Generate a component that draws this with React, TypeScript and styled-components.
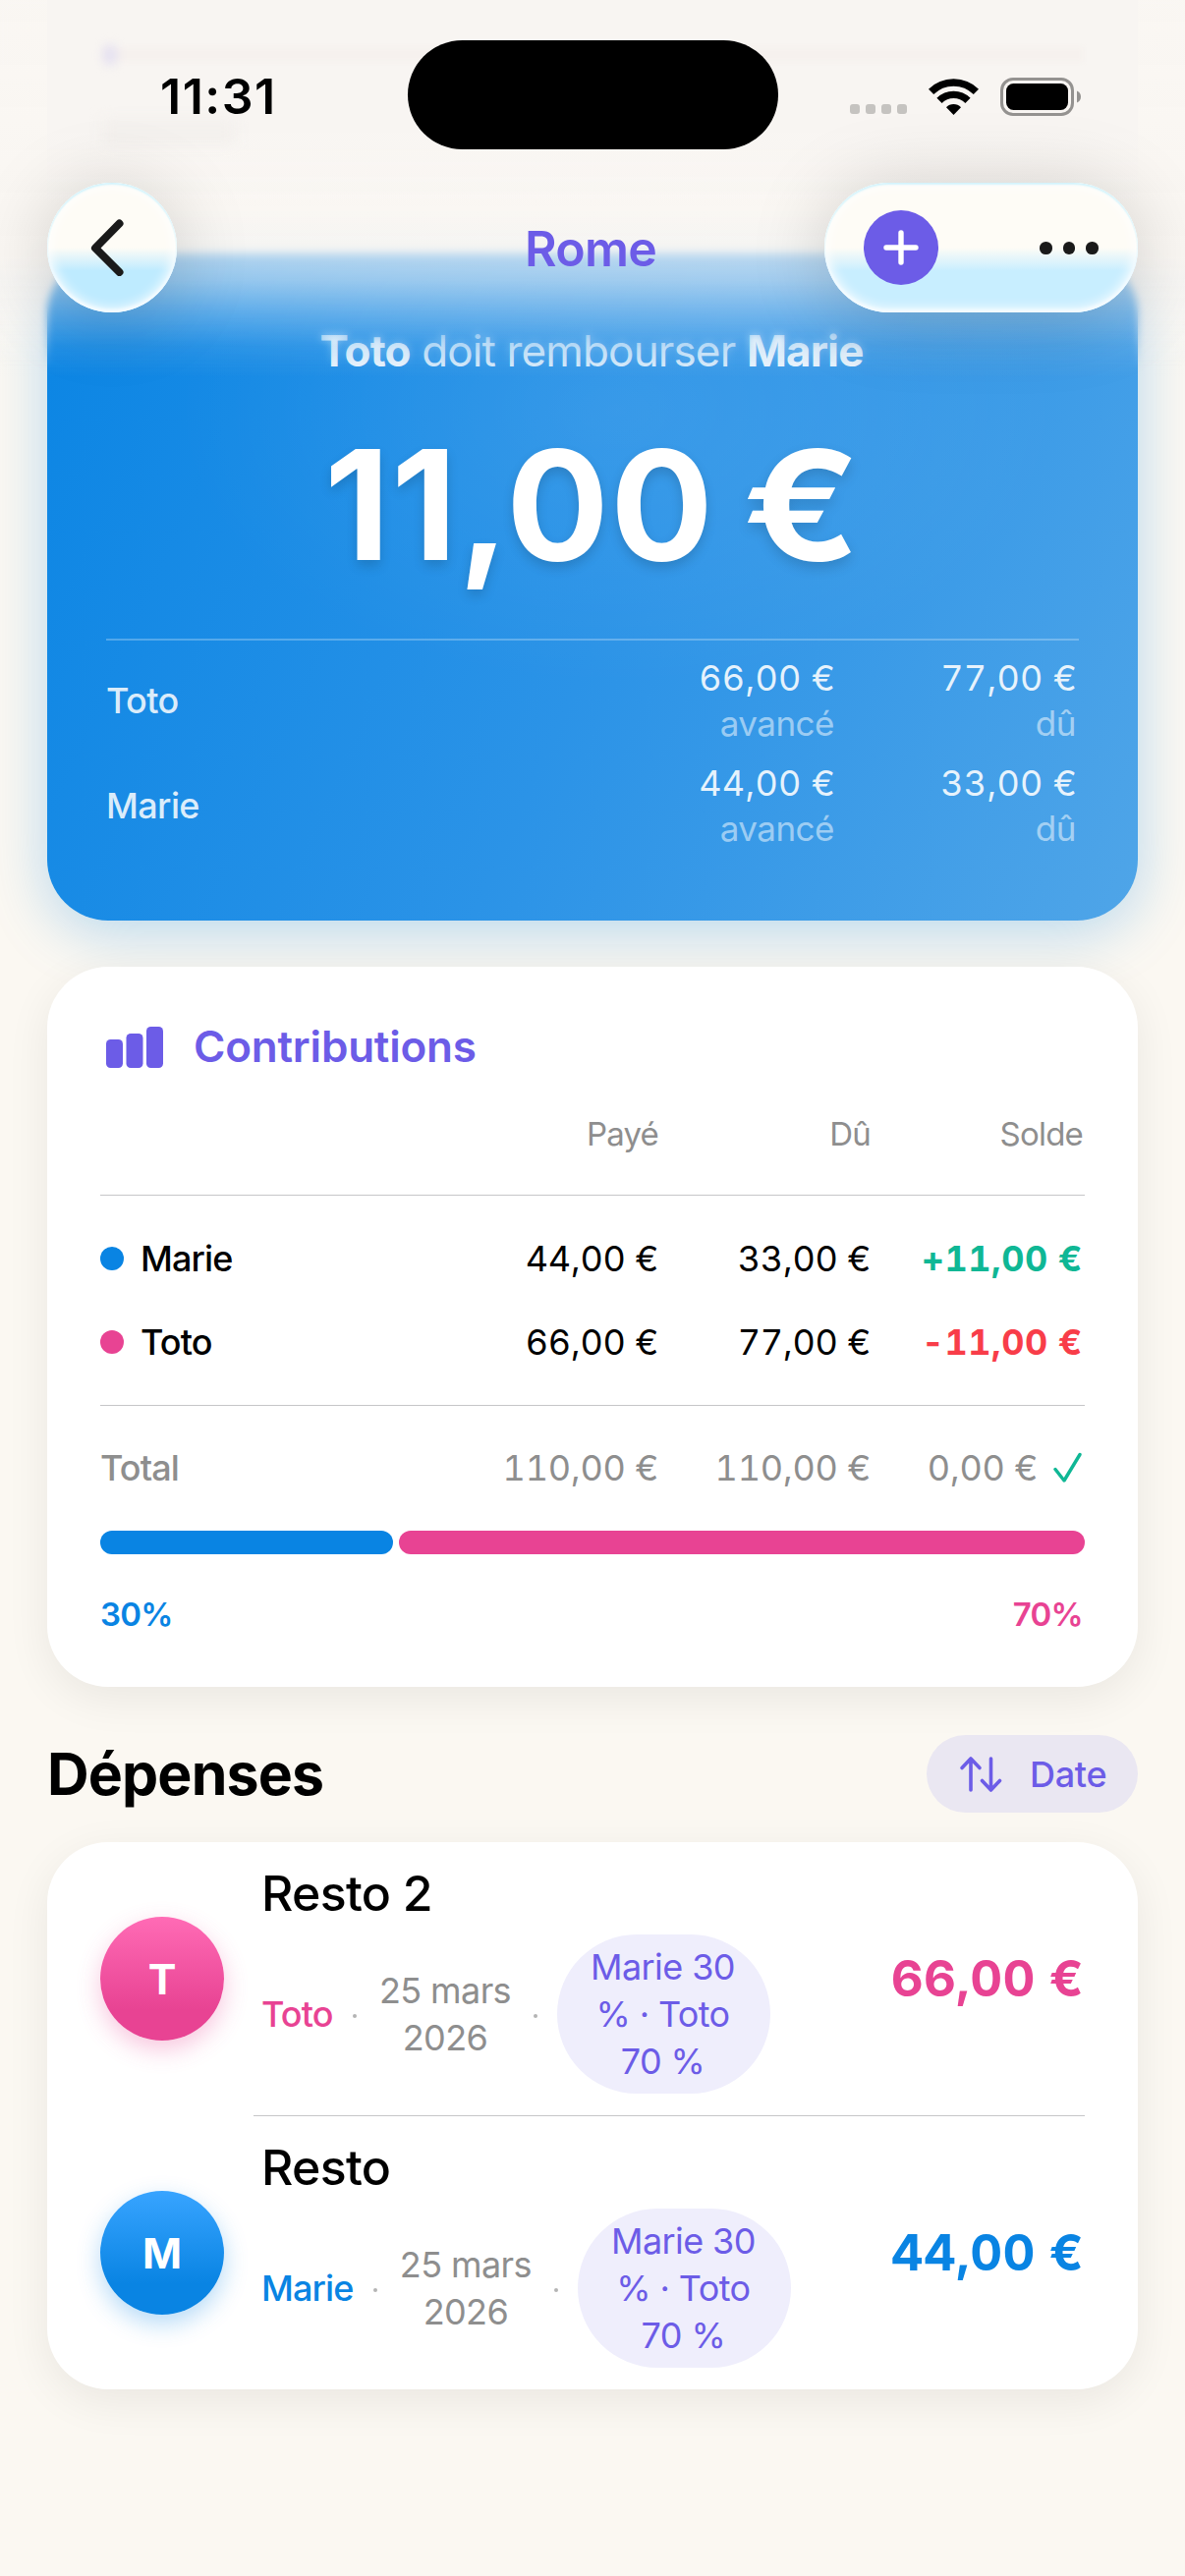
import React from "react";
import styled, { createGlobalStyle } from "styled-components";

const PURPLE = "#6c5ce7";
const BLUE = "#0984e3";
const PINK = "#e84393";
const GREEN = "#0fb795";
const RED = "#f83d49";
const GREY = "#8e8e8e";

const GlobalStyle = createGlobalStyle`
  * { box-sizing: border-box; }
  body { margin: 0; background: #fbf8f2; }
`;

const Screen = styled.div`
  position: relative;
  width: 1206px;
  height: 2622px;
  overflow: hidden;
  background: #fbf8f2;
  color: #000;
  font-family: Inter, "Noto Sans", sans-serif;
  font-size: 36px;
  line-height: 48px;
  white-space: nowrap;
`;

/* Top chrome, laid over the scrolled content */

const TopChrome = styled.header`
  position: absolute;
  inset: 0 0 auto 0;
  height: 400px;
  z-index: 2;
`;

const Veil = styled.div`
  position: absolute;
  inset: 0;
  background: linear-gradient(
    180deg,
    rgba(249, 246, 243, 0.7) 0,
    rgba(249, 246, 243, 0.68) 262px,
    rgba(244, 244, 244, 0.58) 285px,
    rgba(244, 244, 246, 0.3) 322px,
    rgba(244, 246, 250, 0.1) 352px,
    rgba(244, 246, 250, 0) 385px
  );
`;

const SoftBlur = styled.div`
  position: absolute;
  inset: 0;
  height: 376px;
  backdrop-filter: blur(4px);
  mask-image: linear-gradient(180deg, #000 0, #000 310px, transparent 376px);
`;

const GhostCard = styled.div`
  position: absolute;
  inset: -40px 48px auto 48px;
  height: 250px;
  padding: 88px 56px 0;
  background: linear-gradient(180deg, #f8f5f2 70%, rgba(248, 245, 242, 0));
`;

const GhostTrack = styled.div`
  height: 15px;
  background: #f6f1ee;
  filter: blur(2px);
  display: flex;
  align-items: center;
`;

const GhostKnob = styled.div`
  width: 16px;
  height: 22px;
  border-radius: 50%;
  background: #e6e2f1;
  filter: blur(4px);
`;

const GhostLabel = styled.div`
  width: 136px;
  height: 26px;
  margin-top: 58px;
  background: #f3f0ed;
  filter: blur(7px);
`;

const StatusBar = styled.div`
  position: relative;
  height: 186px;
  padding: 41px 106px 0 162px;
  display: grid;
  grid-template-columns: 253px 377px 1fr;
`;

const Clock = styled.div`
  align-self: start;
  padding-left: 1px;
  line-height: 114px;
  font-size: 50px;
  font-weight: 600;
  letter-spacing: 1.5px;
`;

const Island = styled.div`
  height: 111px;
  border-radius: 56px;
  background: #000;
`;

const StatusIcons = styled.div`
  height: 114px;
  display: flex;
  align-items: center;
  justify-content: flex-end;
`;

const Cellular = styled.div`
  display: flex;
  gap: 6px;
  margin: 26px 22px 0 0;
`;

const CellDot = styled.i`
  width: 10px;
  height: 10px;
  border-radius: 3px;
  background: #c5c3c0;
`;

const WifiSvg = styled.svg`
  width: 51px;
  height: 37px;
  margin-right: 22px;
`;

const BatterySvg = styled.svg`
  width: 83px;
  height: 39px;
  margin-right: -1px;
`;

const NavBar = styled.nav`
  position: relative;
  height: 132px;
  padding: 0 48px;
  display: flex;
  justify-content: space-between;
`;

const Glass = styled.div<{ $w: number; $tint: string }>`
  width: ${(p) => p.$w}px;
  height: 132px;
  border-radius: 66px;
  display: flex;
  align-items: center;
  background: linear-gradient(180deg, #fefcf6 0, #fefcf6 50%, ${(p) => p.$tint} 68%, ${(p) => p.$tint} 100%);
  box-shadow:
    inset 0 2px 2px rgba(205, 242, 252, 0.9),
    inset 0 -3px 3px #f4fbff,
    inset 0 0 12px 4px rgba(255, 255, 255, 0.85),
    0 6px 80px rgba(0, 0, 0, 0.18);
`;

const ChevronSvg = styled.svg`
  width: 34px;
  height: 58px;
  margin-left: 44px;
`;

const NavTitle = styled.h1`
  position: absolute;
  left: 0;
  right: 4px;
  margin: 0;
  text-align: center;
  line-height: 134px;
  font-size: 50px;
  font-weight: 600;
  letter-spacing: -0.8px;
  color: ${PURPLE};
`;

const AddSvg = styled.svg`
  width: 76px;
  height: 76px;
  margin-left: 40px;
`;

const MoreDots = styled.div`
  display: flex;
  gap: 11px;
  margin: 1px 0 0 103px;
`;

const MoreDot = styled.i`
  width: 12.6px;
  height: 12.6px;
  border-radius: 50%;
  background: #1a1a1a;
`;

/* Scrolled content */

const Content = styled.main`
  padding: 258px 48px 0;
`;

const Hero = styled.section`
  height: 678.5px;
  padding: 67px 60px 0;
  border-radius: 62px;
  color: #fff;
  background:
    radial-gradient(closest-side, rgba(255, 255, 255, 0.08), rgba(255, 255, 255, 0)) 130px -120px / 900px 560px no-repeat,
    linear-gradient(114deg, #0d86e4 4%, #2b93e7 52%, #4fa5e8 100%);
  box-shadow: 0 12px 60px rgba(9, 132, 227, 0.28);
`;

const Sentence = styled.p`
  margin: 0;
  padding-right: 2px;
  text-align: center;
  font-size: 44px;
  line-height: 64px;
  letter-spacing: -0.86px;
  color: rgba(255, 255, 255, 0.82);

  b { font-weight: 700; color: rgba(255, 255, 255, 0.92); }
`;

const BigAmount = styled.div`
  margin-top: 45px;
  padding-right: 13px;
  text-align: center;
  font-size: 155px;
  line-height: 160px;
  font-weight: 700;
  letter-spacing: 1.5px;
  word-spacing: -10px;
  text-shadow: 0 6px 12px rgba(0, 0, 0, 0.15);
`;

const WideGlyph = styled.span`
  display: inline-block;
  transform: scaleX(1.13);
  transform-origin: 0 50%;
`;

const HeroRule = styled.hr`
  height: 2px;
  margin: 56px 0 16px;
  border: 0;
  background: rgba(255, 255, 255, 0.26);
`;

const HeroRow = styled.div`
  display: grid;
  grid-template-columns: 1fr 246px 246px;
  align-items: center;
  height: 90px;
  margin-bottom: 17px;
  line-height: 45px;
  text-align: right;
`;

const HeroName = styled.div`
  padding-top: 1px;
  text-align: left;
  font-weight: 500;
  letter-spacing: -0.6px;
  color: rgba(255, 255, 255, 0.85);
`;

const HeroValue = styled.div`
  padding-right: 2px;
  font-variant-numeric: tabular-nums;
  letter-spacing: 0.3px;
  color: rgba(255, 255, 255, 0.88);
`;

const HeroLabel = styled.div`
  padding: 1px 3px 0 0;
  margin-bottom: -1px;
  font-size: 35px;
  letter-spacing: -0.5px;
  color: rgba(255, 255, 255, 0.52);
`;

const Card = styled.section`
  border-radius: 62px;
  background: #fff;
  box-shadow: 0 12px 45px rgba(0, 0, 0, 0.07);
`;

const Contributions = styled(Card)`
  height: 733px;
  margin-top: 47.5px;
  padding: 51px 54px 0;
`;

const CardTitle = styled.h2`
  display: flex;
  align-items: center;
  gap: 31px;
  height: 60px;
  margin: 0 0 35px;
  padding-left: 6px;
  font-size: 44px;
  font-weight: 600;
  letter-spacing: -0.2px;
  color: ${PURPLE};
`;

const BarsSvg = styled.svg`
  width: 58px;
  height: 42px;
  margin-top: 2px;
`;

const TableRow = styled.div<{ $h?: number; $muted?: boolean }>`
  display: grid;
  grid-template-columns: 1fr 216px 216px 216px;
  align-items: center;
  height: ${(p) => p.$h ?? 85}px;
  text-align: right;
  color: ${(p) => (p.$muted ? GREY : "#000")};
`;

const HeadCell = styled.div`
  padding-right: 2px;
  font-size: 33px;
  letter-spacing: -0.8px;
`;

const Person = styled.div`
  display: flex;
  align-items: center;
  gap: 17px;
  font-weight: 500;
  letter-spacing: -0.9px;
`;

const Swatch = styled.i<{ $c: string }>`
  width: 24px;
  height: 24px;
  border-radius: 50%;
  background: ${(p) => p.$c};
`;

const Cell = styled.div<{ $c?: string }>`
  padding-right: 2px;
  font-variant-numeric: tabular-nums;
  letter-spacing: ${(p) => (p.$c ? 0.5 : -0.2)}px;
  color: ${(p) => p.$c ?? "inherit"};
  font-weight: ${(p) => (p.$c ? 700 : 400)};
`;

const Balanced = styled(Cell)`
  display: flex;
  align-items: center;
  justify-content: flex-end;
  gap: 16px;
`;

const CheckSvg = styled.svg`
  width: 30px;
  height: 32px;
`;

const Rule = styled.hr<{ $top?: number; $bottom?: number; $left?: number; $right?: number }>`
  height: 1px;
  margin: ${(p) => `${p.$top ?? 0}px ${p.$right ?? 0}px ${p.$bottom ?? 0}px ${p.$left ?? 0}px`};
  border: 0;
  background: #c6c6c8;
`;

const ShareBar = styled.div`
  display: flex;
  gap: 6px;
  height: 24px;
  margin-top: 22px;
`;

const Share = styled.div<{ $c: string; $n: number }>`
  flex: ${(p) => p.$n} 1 0;
  border-radius: 12px;
  background: ${(p) => p.$c};
`;

const ShareLabels = styled.div`
  display: flex;
  justify-content: space-between;
  margin-top: 37px;
  padding-right: 2px;
  font-size: 33px;
  font-weight: 600;
  letter-spacing: -0.7px;
`;

const ShareLabel = styled.span<{ $c: string }>`
  color: ${(p) => p.$c};
`;

const SectionHead = styled.div`
  display: flex;
  align-items: center;
  justify-content: space-between;
  height: 79px;
  margin: 49px 0 30px;
`;

const SectionTitle = styled.h2`
  margin: 0;
  font-size: 59px;
  font-weight: 700;
  letter-spacing: -0.86px;
`;

const SortButton = styled.div`
  display: flex;
  align-items: center;
  gap: 28px;
  width: 215px;
  height: 79px;
  padding-left: 33px;
  border-radius: 40px;
  background: #eae7f2;
  font-weight: 500;
  letter-spacing: -0.3px;
  color: ${PURPLE};
`;

const SortSvg = styled.svg`
  width: 44px;
  height: 42px;
`;

const ExpenseRow = styled.div`
  display: flex;
  align-items: center;
  height: 278px;
  padding: 0 54px;
`;

const Avatar = styled.div<{ $from: string; $to: string; $glow: string }>`
  width: 126px;
  height: 126px;
  border-radius: 50%;
  line-height: 126px;
  text-align: center;
  font-size: 43px;
  font-weight: 700;
  color: #fff;
  background: linear-gradient(180deg, ${(p) => p.$from} 0, ${(p) => p.$to} 75%);
  box-shadow: 0 9px 24px ${(p) => p.$glow};
`;

const ExpenseBody = styled.div`
  flex: 1;
  margin-left: 38px;
`;

const ExpenseTitle = styled.div`
  height: 61px;
  margin-bottom: 11.5px;
  line-height: 61px;
  font-size: 50px;
  font-weight: 500;
  letter-spacing: -0.7px;
`;

const Meta = styled.div`
  display: flex;
  align-items: center;
`;

const Payer = styled.span<{ $c: string }>`
  font-weight: 500;
  letter-spacing: -0.9px;
  color: ${(p) => p.$c};
`;

const Middot = styled.i`
  width: 4px;
  height: 4px;
  margin: 3px 22px 0 21px;
  border-radius: 50%;
  background: #b4b4b4;
`;

const When = styled.span`
  width: 136px;
  padding-right: 1px;
  margin-right: 1px;
  text-align: center;
  letter-spacing: -0.6px;
  color: ${GREY};
`;

const SplitTag = styled.span`
  width: 217px;
  margin-left: -2px;
  padding: 9px 3px 9px 0;
  border-radius: 82px;
  text-align: center;
  letter-spacing: -0.6px;
  background: #efeefc;
  color: ${PURPLE};
`;

const Amount = styled.div<{ $c: string }>`
  padding-right: 1px;
  font-size: 51px;
  font-weight: 700;
  font-variant-numeric: tabular-nums;
  letter-spacing: 0.3px;
  color: ${(p) => p.$c};
`;

const hero = [
  { name: "Toto", paid: "66,00 €", due: "77,00 €" },
  { name: "Marie", paid: "44,00 €", due: "33,00 €" },
];

const members = [
  { name: "Marie", color: BLUE, paid: "44,00 €", due: "33,00 €", balance: "+11,00 €", tone: GREEN },
  { name: "Toto", color: PINK, paid: "66,00 €", due: "77,00 €", balance: "-11,00 €", tone: RED },
];

const expenses = [
  { title: "Resto 2", payer: "Toto", color: PINK, from: "#ff6bb5", glow: "rgba(232,67,147,.3)", amount: "66,00 €" },
  { title: "Resto", payer: "Marie", color: BLUE, from: "#38a4ff", glow: "rgba(9,132,227,.3)", amount: "44,00 €" },
];

export default function App() {
  return (
    <Screen>
      <GlobalStyle />
      <Content>
        <Hero>
          <Sentence>
            <b>Toto</b> doit rembourser <b>Marie</b>
          </Sentence>
          <BigAmount>
            11,00 <WideGlyph>€</WideGlyph>
          </BigAmount>
          <HeroRule />
          {hero.map((h) => (
            <HeroRow key={h.name}>
              <HeroName>{h.name}</HeroName>
              <div>
                <HeroValue>{h.paid}</HeroValue>
                <HeroLabel>avancé</HeroLabel>
              </div>
              <div>
                <HeroValue>{h.due}</HeroValue>
                <HeroLabel>dû</HeroLabel>
              </div>
            </HeroRow>
          ))}
        </Hero>

        <Contributions>
          <CardTitle>
            <BarsSvg viewBox="0 0 58 42" fill={PURPLE}>
              <rect x="0" y="13" width="17" height="29" rx="4.5" />
              <rect x="20.5" y="7" width="17" height="35" rx="4.5" />
              <rect x="41" y="0" width="17" height="42" rx="4.5" />
            </BarsSvg>
            Contributions
          </CardTitle>
          <TableRow $h={40} $muted>
            <div />
            <HeadCell>Payé</HeadCell>
            <HeadCell>Dû</HeadCell>
            <HeadCell>Solde</HeadCell>
          </TableRow>
          <Rule $top={46} $bottom={21} />
          {members.map((m) => (
            <TableRow key={m.name}>
              <Person>
                <Swatch $c={m.color} />
                {m.name}
              </Person>
              <Cell>{m.paid}</Cell>
              <Cell>{m.due}</Cell>
              <Cell $c={m.tone}>{m.balance}</Cell>
            </TableRow>
          ))}
          <Rule $top={22} $bottom={20} />
          <TableRow $muted>
            <Person>Total</Person>
            <Cell>110,00 €</Cell>
            <Cell>110,00 €</Cell>
            <Balanced>
              0,00 €
              <CheckSvg viewBox="0 0 30 32" fill="none" stroke={GREEN} strokeWidth="3.4" strokeLinecap="round" strokeLinejoin="round">
                <path d="M2 17.5 L11 29 L27 2.5" />
              </CheckSvg>
            </Balanced>
          </TableRow>
          <ShareBar>
            <Share $c={BLUE} $n={298} />
            <Share $c={PINK} $n={698} />
          </ShareBar>
          <ShareLabels>
            <ShareLabel $c={BLUE}>30%</ShareLabel>
            <ShareLabel $c={PINK}>70%</ShareLabel>
          </ShareLabels>
        </Contributions>

        <SectionHead>
          <SectionTitle>Dépenses</SectionTitle>
          <SortButton>
            <SortSvg viewBox="0 0 44 42" fill="none" stroke={PURPLE} strokeWidth="3.6" strokeLinecap="round" strokeLinejoin="round">
              <path d="M12 37 V5 M3 14.5 L12 5 L21 14.5" />
              <path d="M32.500 5 V37 M23.500 27.500 L32.500 37 L41.500 27.500" />
            </SortSvg>
            Date
          </SortButton>
        </SectionHead>

        <Card>
          {expenses.map((e, i) => (
            <React.Fragment key={e.title}>
              {i > 0 && <Rule $left={210} $right={54} />}
              <ExpenseRow>
                <Avatar $from={e.from} $to={e.color} $glow={e.glow}>
                  {e.payer[0]}
                </Avatar>
                <ExpenseBody>
                  <ExpenseTitle>{e.title}</ExpenseTitle>
                  <Meta>
                    <Payer $c={e.color}>{e.payer}</Payer>
                    <Middot />
                    <When>
                      25 mars
                      <br />
                      2026
                    </When>
                    <Middot />
                    <SplitTag>
                      Marie 30
                      <br />% · Toto
                      <br />
                      70 %
                    </SplitTag>
                  </Meta>
                </ExpenseBody>
                <Amount $c={e.color}>{e.amount}</Amount>
              </ExpenseRow>
            </React.Fragment>
          ))}
        </Card>
      </Content>

      <TopChrome>
        <SoftBlur />
        <Veil />
        <GhostCard>
          <GhostTrack>
            <GhostKnob />
          </GhostTrack>
          <GhostLabel />
        </GhostCard>
        <StatusBar>
          <Clock>11:31</Clock>
          <Island />
          <StatusIcons>
            <Cellular>
              <CellDot />
              <CellDot />
              <CellDot />
              <CellDot />
            </Cellular>
            <WifiSvg viewBox="0 0 51 37">
              <g fill="none" stroke="#000" strokeWidth="7.4">
                <path d="M2.6 13.400 A32.500 32.500 0 0 1 48.400 13.400" />
                <path d="M11 22.300 A20.600 20.600 0 0 1 40 22.300" />
              </g>
              <path d="M25.500 37 L18 29.200 A10.500 10.500 0 0 1 33 29.200 Z" />
            </WifiSvg>
            <BatterySvg viewBox="0 0 83 39">
              <rect x="1.500" y="1.500" width="72" height="36" rx="11.500" fill="none" stroke="#949290" strokeWidth="3" />
              <rect x="6" y="6" width="63" height="27" rx="7.500" />
              <path d="M78 13.500 C80.500 14.500 82 16.800 82 19.500 C82 22.200 80.500 24.500 78 25.500 Z" fill="#949290" />
            </BatterySvg>
          </StatusIcons>
        </StatusBar>
        <NavBar>
          <NavTitle>Rome</NavTitle>
          <Glass $w={132} $tint="#beebff">
            <ChevronSvg viewBox="0 0 34 58" fill="none" stroke="#1a1a1a" strokeWidth="8" strokeLinecap="round" strokeLinejoin="round">
              <path d="M29.500 4.500 L5 29.500 L29.500 54" />
            </ChevronSvg>
          </Glass>
          <Glass $w={319} $tint="#c8eeff">
            <AddSvg viewBox="0 0 76 76">
              <circle cx="38" cy="38" r="38" fill={PURPLE} />
              <path d="M38 23 V53 M23 38 H53" stroke="#fff" strokeWidth="5.400" strokeLinecap="round" />
            </AddSvg>
            <MoreDots>
              <MoreDot />
              <MoreDot />
              <MoreDot />
            </MoreDots>
          </Glass>
        </NavBar>
      </TopChrome>
    </Screen>
  );
}
